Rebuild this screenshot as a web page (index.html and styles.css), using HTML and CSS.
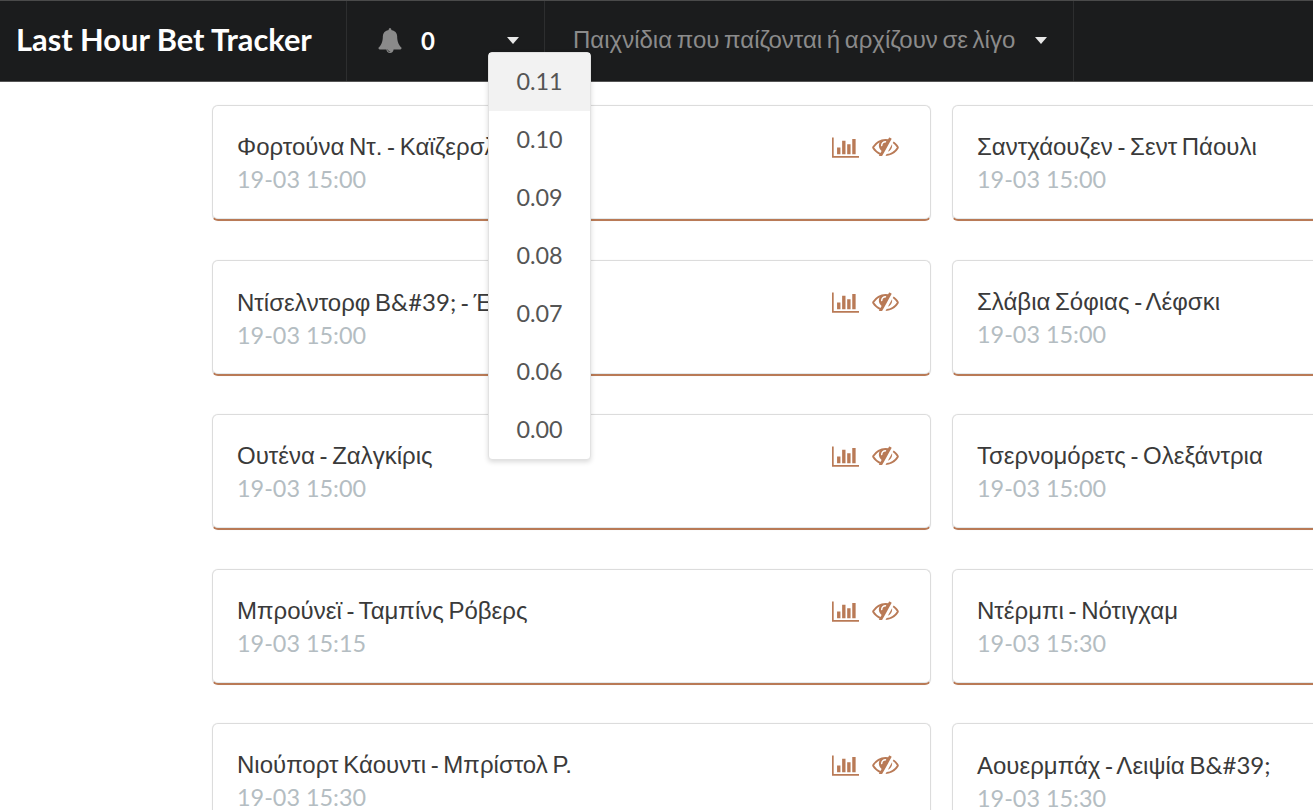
FILE: index.html
```html
<!DOCTYPE html>
<html lang="el">
<head>
    <meta charset="UTF-8">
    <title>Last Hour Bet Tracker</title>
    <link rel="stylesheet" href="styles.css">
</head>
<body>
    <svg class="icon-defs" width="0" height="0">
        <symbol id="i-chart" viewBox="0 128 2048 1536">
            <path d="M640 896v512h-256v-512h256zm384-512v1024h-256v-1024h256zm1024 1152v128h-2048v-1536h128v1408h1920zm-640-896v768h-256v-768h256zm384-384v1152h-256v-1152h256z"/>
        </symbol>
        <symbol id="i-eye" viewBox="0 256 1792 1280">
            <path d="M555 1335l78-141q-87-63-136-159t-49-203q0-121 61-225-229 117-381 353 167 258 427 375zm389-759q0-20-14-34t-34-14q-125 0-214.500 89.500t-89.500 214.500q0 20 14 34t34 14 34-14 14-34q0-86 61-147t147-61q20 0 34-14t14-34zm363-191q0 7-1 9-106 189-316 567t-315 566l-49 89q-10 16-28 16-12 0-134-70-16-10-16-28 0-12 44-87-143-65-263.500-173t-208.500-245q-20-31-20-69t20-69q153-235 380-371t496-136q89 0 180 17l54-97q10-16 28-16 5 0 18 6t31 15.500 33 18.500 31.500 18.500 19.500 11.500q16 10 16 27zm37 447q0 139-79 253.500t-209 164.500l280-502q8 45 8 84zm448 128q0 35-20 69-39 64-109 145-150 172-347.500 267t-419.500 95l74-132q212-18 392.500-137t301.500-307q-115-179-282-294l63-112q95 64 182.500 153t144.500 184q20 34 20 69z"/>
        </symbol>
        <symbol id="i-bell" viewBox="64 0 1664 1792">
            <path d="M912 1696q0-16-16-16-59 0-101.500-42.500t-42.500-101.500q0-16-16-16t-16 16q0 73 51.500 124.500t124.500 51.500q16 0 16-16zm816-288q0 52-38 90t-90 38h-448q0 106-75 181t-181 75-181-75-75-181h-448q-52 0-90-38t-38-90q50-42 91-88t85-119.500 74.500-158.500 50-206 19.500-260q0-152 117-282.500t307-158.500q-8-19-8-39 0-40 28-68t68-28 68 28 28 68q0 20-8 39 190 28 307 158.500t117 282.500q0 139 19.500 260t50 206 74.500 158.500 85 119.500 91 88z"/>
        </symbol>
    </svg>

    <nav class="topbar">
        <div class="brand">Last Hour Bet Tracker</div>
        <div class="nav-item threshold">
            <svg class="bell"><use href="#i-bell"/></svg>
            <span class="count">0</span>
            <span class="caret"></span>
            <div class="menu">
                <div class="menu-item selected">0.11</div>
                <div class="menu-item">0.10</div>
                <div class="menu-item">0.09</div>
                <div class="menu-item">0.08</div>
                <div class="menu-item">0.07</div>
                <div class="menu-item">0.06</div>
                <div class="menu-item">0.00</div>
            </div>
        </div>
        <div class="nav-item games">
            <span>Παιχνίδια που παίζονται ή αρχίζουν σε λίγο</span>
            <span class="caret"></span>
        </div>
    </nav>

    <main class="cards">
        <div class="card">
            <div class="card-text"><div class="title">Φορτούνα Ντ. - Καϊζερσλάουτερν</div><div class="when">19-03 15:00</div></div>
            <div class="card-icons"><svg class="chart"><use href="#i-chart"/></svg><svg class="eye"><use href="#i-eye"/></svg></div>
        </div>
        <div class="card">
            <div class="card-text"><div class="title">Σαντχάουζεν - Σεντ Πάουλι</div><div class="when">19-03 15:00</div></div>
            <div class="card-icons"><svg class="chart"><use href="#i-chart"/></svg><svg class="eye"><use href="#i-eye"/></svg></div>
        </div>
        <div class="card">
            <div class="card-text"><div class="title">Ντίσελντορφ Β<span class="latin">&amp;#39;</span> - Έσεν</div><div class="when">19-03 15:00</div></div>
            <div class="card-icons"><svg class="chart"><use href="#i-chart"/></svg><svg class="eye"><use href="#i-eye"/></svg></div>
        </div>
        <div class="card">
            <div class="card-text"><div class="title">Σλάβια Σόφιας - Λέφσκι</div><div class="when">19-03 15:00</div></div>
            <div class="card-icons"><svg class="chart"><use href="#i-chart"/></svg><svg class="eye"><use href="#i-eye"/></svg></div>
        </div>
        <div class="card">
            <div class="card-text"><div class="title">Ουτένα - Ζαλγκίρις</div><div class="when">19-03 15:00</div></div>
            <div class="card-icons"><svg class="chart"><use href="#i-chart"/></svg><svg class="eye"><use href="#i-eye"/></svg></div>
        </div>
        <div class="card">
            <div class="card-text"><div class="title">Τσερνομόρετς - Ολεξάντρια</div><div class="when">19-03 15:00</div></div>
            <div class="card-icons"><svg class="chart"><use href="#i-chart"/></svg><svg class="eye"><use href="#i-eye"/></svg></div>
        </div>
        <div class="card">
            <div class="card-text"><div class="title">Μπρούνεϊ - Ταμπίνς Ρόβερς</div><div class="when">19-03 15:15</div></div>
            <div class="card-icons"><svg class="chart"><use href="#i-chart"/></svg><svg class="eye"><use href="#i-eye"/></svg></div>
        </div>
        <div class="card">
            <div class="card-text"><div class="title">Ντέρμπι - Νότιγχαμ</div><div class="when">19-03 15:30</div></div>
            <div class="card-icons"><svg class="chart"><use href="#i-chart"/></svg><svg class="eye"><use href="#i-eye"/></svg></div>
        </div>
        <div class="card">
            <div class="card-text"><div class="title">Νιούπορτ Κάουντι - Μπρίστολ Ρ.</div><div class="when">19-03 15:30</div></div>
            <div class="card-icons"><svg class="chart"><use href="#i-chart"/></svg><svg class="eye"><use href="#i-eye"/></svg></div>
        </div>
        <div class="card">
            <div class="card-text"><div class="title">Αουερμπάχ - Λειψία Β<span class="latin">&amp;#39;</span></div><div class="when">19-03 15:30</div></div>
            <div class="card-icons"><svg class="chart"><use href="#i-chart"/></svg><svg class="eye"><use href="#i-eye"/></svg></div>
        </div>
    </main>
</body>
</html>
```
FILE: styles.css
```css
html, body {
    margin: 0;
    height: 810px;
    overflow: hidden;
    background: #fff;
}
body {
    font-family: Lato, "Liberation Sans", Arial, sans-serif;
    color: #3b3b3b;
}
.icon-defs {
    position: absolute;
}
.topbar {
    display: flex;
    height: 82px;
    box-sizing: border-box;
    background: #1b1c1d;
    border-top: 1px solid #4a4a4a;
    border-bottom: 1px solid #555;
}
.brand {
    width: 347px;
    box-sizing: border-box;
    padding-left: 16px;
    border-right: 1px solid #2d2e2f;
    color: #fff;
    font-size: 30.800px;
    font-weight: 700;
    line-height: 77px;
}
.nav-item {
    position: relative;
    display: flex;
    align-items: center;
    box-sizing: border-box;
    padding-bottom: 2px;
    border-right: 1px solid #2d2e2f;
}
.threshold {
    width: 198px;
    padding-left: 31px;
}
.bell {
    width: 24px;
    height: 25px;
    fill: #8a8a8a;
}
.count {
    margin-left: 19px;
    color: #fff;
    font-size: 24px;
    font-weight: 700;
}
.caret {
    width: 0;
    height: 0;
    border-left: 6px solid transparent;
    border-right: 6px solid transparent;
    border-top: 7px solid #e8e8e8;
}
.threshold .caret {
    margin-left: 72px;
}
.games {
    width: 529px;
    padding-left: 28px;
    color: #8b8b8b;
    font-family: "Liberation Sans", Arial, sans-serif;
    font-size: 24px;
    word-spacing: -2px;
    white-space: nowrap;
}
.games .caret {
    margin-left: 20px;
}
.menu {
    position: absolute;
    top: 51px;
    left: 141px;
    z-index: 5;
    width: 101px;
    border-radius: 4px;
    background: #fff;
    border: 1px solid #e2e2e2;
    box-shadow: 0 2px 5px rgba(0, 0, 0, 0.15);
    font-family: Lato, sans-serif;
}
.menu-item {
    height: 58px;
    padding-bottom: 2px;
    box-sizing: border-box;
    line-height: 56px;
    text-align: center;
    font-size: 23.400px;
    color: #555;
}
.menu-item.selected {
    background: #f2f2f2;
}
.cards {
    display: grid;
    grid-template-columns: 719px 719px;
    column-gap: 21px;
    row-gap: 38.5px;
    padding: 23px 0 0 212px;
}
.card {
    display: flex;
    justify-content: space-between;
    height: 116px;
    box-sizing: border-box;
    padding: 24px 31px 0 24px;
    border: 1px solid #dcdcdc;
    border-bottom: 2px solid #b97a56;
    border-radius: 6px;
    box-shadow: inset 0 -1px 0 #e3e9ec, 0 0 1px #dcdcdc;
}
.title {
    font-family: "Liberation Sans", Arial, sans-serif;
    font-size: 24px;
    word-spacing: -2px;
    line-height: 33px;
    color: #3a3a3a;
    white-space: nowrap;
}
.latin {
    font-family: Lato, sans-serif;
}
.when {
    font-size: 23.400px;
    line-height: 32px;
    color: #b4bdc2;
}
.card-icons {
    display: flex;
    align-items: flex-start;
    gap: 13px;
    padding-top: 7px;
    fill: #b97a56;
}
.chart {
    width: 27px;
    height: 21px;
}
.eye {
    width: 27px;
    height: 19px;
}
```
